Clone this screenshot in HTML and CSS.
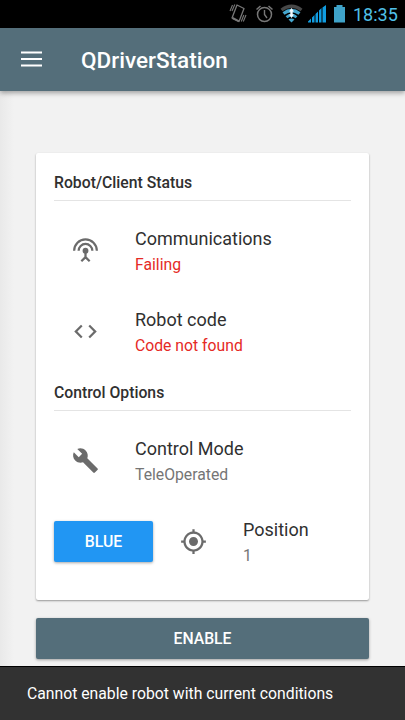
FILE: index.html
```
<!DOCTYPE html>
<html lang="en">
<head>
<meta charset="utf-8">
<title>QDriverStation</title>
<link rel="stylesheet" href="styles.css">
</head>
<body>
<div class="screen">
  <div class="statusbar">
    <svg width="120" height="28" viewBox="0 0 120 28">
      <g fill="none" stroke="#777" stroke-width="1.1">
        <path d="M8 5 L15 8.500 L10 21.500 L3 18 Z" stroke-linejoin="round" stroke-width="1.300"/>
        <path d="M3.500 18 L10 21.300" stroke-width="2"/>
        <path d="M3.500 5 L1 11 M5.800 4.500 L3 11 M14.800 15 L12.300 21.500 M17 15 L14.300 21.500"/>
        <circle cx="35.500" cy="14.500" r="7" stroke-width="1.500"/>
        <path d="M35.500 10 V14.500 L38 18" stroke-width="1.400"/>
        <path d="M27.500 9.500 L31.500 6 M43.500 9.500 L39.500 6" stroke-width="1.500"/>
      </g>
      <path d="M52.500 10 Q62.500 2.500 72.500 10" fill="none" stroke="#484848" stroke-width="3.200"/>
      <path d="M54.500 13.500 Q62.500 7.500 70.500 13.500" fill="none" stroke="#45a7cf" stroke-width="3.200"/>
      <path d="M57.500 17.200 Q62.500 13 67.500 17.200" fill="none" stroke="#45a7cf" stroke-width="2.800"/>
      <path d="M59.500 19.500 Q62.500 17.500 65.500 19.500 L62.500 22.500Z" fill="#45a7cf"/>
      <path d="M62.500 8 L65 11.500 H63.700 V14.500 H65 L62.500 18 L60 14.500 H61.300 V11.500 H60 Z" fill="#f4fbff"/>
      <path d="M79 22.500 V21.500 L82 18.500 V22.500Z M83 22.500 V17.500 L85.500 15 V22.500Z M86.500 22.500 V14 L89 11.500 V22.500Z M90 22.500 V10.500 L92.500 8 V22.500Z M93.500 22.500 V7.500 L97 5 V22.500Z" fill="#109ce0"/>
      <path d="M107.500 5 H113.500 V7 H116 V22.500 H105 V7 H107.500Z" fill="#3fa3c9"/>
    </svg>
    <span class="clock">18:35</span>
  </div>
  <header class="appbar">
    <svg class="menu" width="21" height="16" viewBox="0 0 21 16"><path d="M0 1.500H21M0 8H21M0 14.500H21" stroke="#fff" stroke-width="2.100"/></svg>
    <h1>QDriverStation</h1>
  </header>
  <main>
    <section class="card">
      <h2>Robot/Client Status</h2>
      <div class="row">
        <svg class="icon" viewBox="0 0 24 24">
          <g fill="none" stroke="#6b6b6b" stroke-width="2">
            <path d="M1.900 12.300a10.100 10.100 0 0 1 20.200 0M5.900 12.300a6.100 6.100 0 0 1 12.200 0"/>
            <path d="M12 12V18M8.300 21.600L12 17.900L15.700 21.600"/>
          </g>
          <circle cx="12" cy="12.200" r="2.600"/>
        </svg>
        <div class="label"><p>Communications</p><small class="error">Failing</small></div>
      </div>
      <div class="row">
        <svg class="icon" viewBox="0 0 24 24"><path d="M9.400 16.600L4.800 12l4.600-4.600L8 6l-6 6 6 6 1.400-1.400zm5.200 0l4.600-4.600-4.600-4.600L16 6l6 6-6 6-1.400-1.400z"/></svg>
        <div class="label"><p>Robot code</p><small class="error">Code not found</small></div>
      </div>
      <h2 class="second">Control Options</h2>
      <div class="row">
        <svg class="icon" viewBox="0 0 24 24"><path d="M22.700 19l-9.100-9.100c.9-2.300.4-5-1.500-6.900-2-2-5-2.400-7.400-1.300L9 6 6 9 1.600 4.700C.4 7.100.9 10.100 2.900 12.100c1.900 1.900 4.600 2.400 6.900 1.500l9.100 9.100c.4.4 1 .4 1.400 0l2.300-2.300c.5-.4.5-1.100.1-1.400z"/></svg>
        <div class="label"><p>Control Mode</p><small>TeleOperated</small></div>
      </div>
      <div class="row">
        <button class="blue">BLUE</button>
        <svg class="icon" viewBox="0 0 24 24"><path d="M12 8c-2.210 0-4 1.790-4 4s1.790 4 4 4 4-1.790 4-4-1.790-4-4-4zm8.940 3c-.46-4.170-3.770-7.480-7.940-7.940V1h-2v2.060C6.830 3.520 3.520 6.830 3.060 11H1v2h2.060c.46 4.170 3.770 7.480 7.940 7.940V23h2v-2.060c4.170-.46 7.480-3.770 7.940-7.940H23v-2h-2.060zM12 19c-3.870 0-7-3.130-7-7s3.130-7 7-7 7 3.130 7 7-3.130 7-7 7z"/></svg>
        <div class="label"><p>Position</p><small>1</small></div>
      </div>
    </section>
    <button class="enable">ENABLE</button>
  </main>
  <footer class="snackbar">Cannot enable robot with current conditions</footer>
</div>
</body>
</html>
```
FILE: styles.css
```
* { box-sizing: border-box; }
body, h1, h2, p { margin: 0; }
body { font-family: Roboto, sans-serif; color: #303030; }
.screen {
  width: 405px;
  height: 720px;
  display: flex;
  flex-direction: column;
  overflow: hidden;
  background: linear-gradient(90deg, #e9e9e9, #f2f2f2 14px);
}
.statusbar {
  flex: none;
  height: 28px;
  display: flex;
  justify-content: flex-end;
  padding-right: 7px;
  background: #000;
}
.statusbar svg { margin-right: 4px; }
.clock { width: 45px; white-space: nowrap; font-size: 18px; line-height: 30px; color: #50c0e9; }
.appbar {
  flex: none;
  height: 63px;
  display: flex;
  align-items: center;
  padding: 1px 21px 0;
  background: #546e7a;
  box-shadow: 0 2px 5px rgba(0, 0, 0, .35);
}
.menu { margin: 0 39px 2px 0; }
h1 { font-size: 22.5px; font-weight: 500; color: #fff; }
main { flex: 1; padding: 62px 36px 0; }
.card {
  height: 447px;
  padding: 18px;
  background: #fff;
  border-radius: 2px;
  box-shadow: 0 1px 2px rgba(0, 0, 0, .38);
}
h2 {
  height: 30px;
  margin-bottom: 9px;
  border-bottom: 1px solid #e4e4e4;
  font-size: 15.75px;
  font-weight: 500;
  line-height: 23px;
}
h2.second { height: 39px; line-height: 41px; }
.row { height: 81px; display: flex; align-items: center; }
.icon { flex: none; width: 27px; height: 27px; margin: 0 36px 1px 18px; fill: #6b6b6b; }
.label { padding-top: 2px; }
.label p { font-size: 18px; line-height: 26px; }
.label small { display: block; font-size: 15.75px; line-height: 25px; color: #757575; }
.label .error { color: #e52a25; }
button {
  border: 0;
  border-radius: 2px;
  padding: 0;
  height: 41px;
  font: 500 15.75px Roboto, sans-serif;
  color: #fff;
  box-shadow: 0 1px 3px rgba(0, 0, 0, .35);
}
.blue { width: 99px; margin-right: 9px; background: #2196f3; }
.enable { display: block; width: 100%; margin-top: 18px; background: #546e7a; }
.snackbar {
  flex: none;
  height: 54px;
  padding-left: 27px;
  border-top: 1px solid #000;
  background: #323232;
  font-size: 15.75px;
  line-height: 54px;
  color: #fff;
}
```
